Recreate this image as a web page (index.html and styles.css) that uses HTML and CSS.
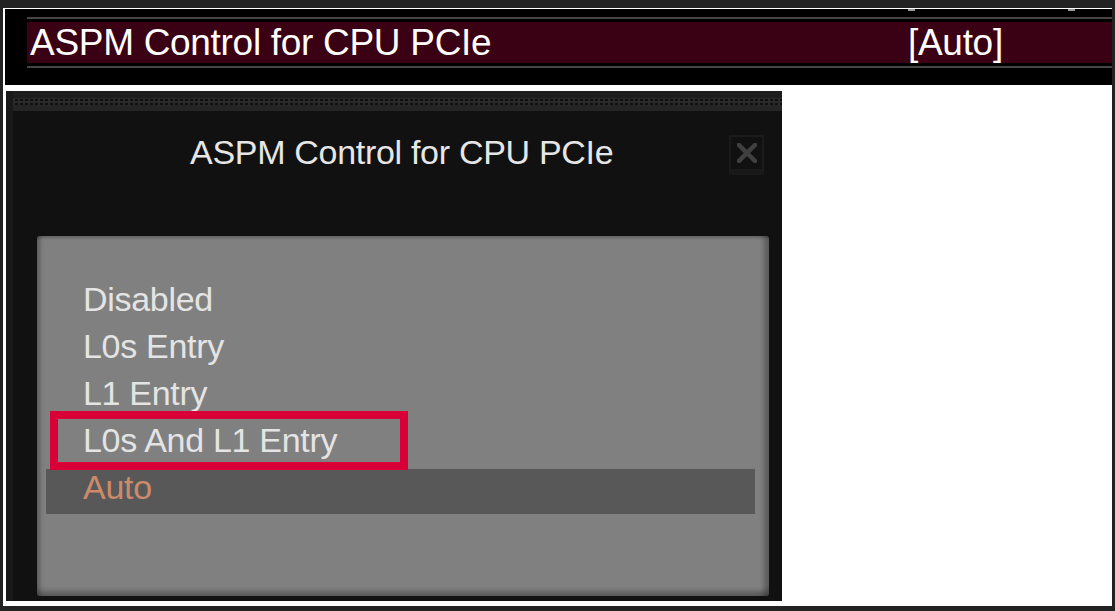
FILE: index.html
```html
<!DOCTYPE html>
<html>
<head>
<meta charset="utf-8">
<link rel="stylesheet" href="styles.css">
</head>
<body>
<div class="frame">
  <section class="bios">
    <div class="prev"><span class="tick tick-a"></span><span class="tick tick-b"></span></div>
    <div class="rule"></div>
    <div class="row">
      <span class="row-label">ASPM Control for CPU PCIe</span>
      <span class="row-value">[Auto]</span>
    </div>
    <div class="rule"></div>
  </section>
  <section class="dialog">
    <div class="dialog-bar"><div class="dots"></div></div>
    <div class="dialog-head">
      <h1 class="dialog-title">ASPM Control for CPU PCIe</h1>
      <button class="close" type="button" aria-label="Close">
        <svg width="20" height="20" viewBox="0 0 20 20"><path d="M2 2 L18 18 M18 2 L2 18" stroke="#404040" stroke-width="4.5" stroke-linecap="square"/></svg>
      </button>
    </div>
    <div class="panel">
      <ul class="options">
        <li class="opt">Disabled</li>
        <li class="opt">L0s Entry</li>
        <li class="opt">L1 Entry</li>
        <li class="opt opt-marked">L0s And L1 Entry<span class="mark"></span></li>
        <li class="opt opt-selected">Auto</li>
      </ul>
    </div>
  </section>
</div>
</body>
</html>
```

FILE: styles.css
```css
html, body {
  margin: 0;
  padding: 0;
}
body {
  background: #222222;
  width: 1115px;
  height: 611px;
  overflow: hidden;
  padding: 8px 3px 0 3px;
  box-sizing: border-box;
  font-family: "Liberation Sans", Arial, sans-serif;
}
.frame {
  background: #ffffff;
  height: 598px;
  padding: 1px 0 0 2px;
  box-sizing: border-box;
}
.bios {
  background: #000000;
  height: 76px;
  padding-left: 22px;
  box-sizing: border-box;
}
.prev {
  height: 8px;
  display: flex;
}
.tick {
  display: block;
  width: 7px;
  height: 2px;
  background: #9a9a9a;
}
.tick-a { margin-left: 881px; }
.tick-b { margin-left: 153px; }
.rule {
  height: 2px;
  background: #454545;
}
.row {
  margin: 3px 0;
  height: 41px;
  background: #3a0013;
  color: #ffffff;
  font-size: 37px;
  letter-spacing: -0.3px;
  line-height: 41px;
  display: grid;
  grid-template-columns: 878px auto;
  padding-left: 3px;
  box-sizing: border-box;
}
.dialog {
  margin: 6px 0 0 1px;
  width: 776px;
  height: 510px;
  background: #111111;
  border-left: 7px solid #191919;
  box-sizing: border-box;
  display: flex;
  flex-direction: column;
}
.dialog-bar {
  height: 20px;
  background: linear-gradient(#1e1e1e 0 7px, #2a2a2a 7px 14px, #252525 14px 20px);
  padding-top: 8px;
  box-sizing: border-box;
}
.dots {
  height: 6px;
  margin-left: 2px;
  background:
    repeating-linear-gradient(90deg, transparent 0 3px, #2a2a2a 3px 5px),
    repeating-linear-gradient(180deg, #0f0f0f 0 2px, #2a2a2a 2px 4px);
}
.dialog-head {
  height: 125px;
  display: flex;
  align-items: flex-start;
  padding: 21px 18px 0 177px;
  box-sizing: border-box;
}
.dialog-title {
  margin: 0;
  font-weight: normal;
  font-size: 34px;
  letter-spacing: -0.3px;
  line-height: 40px;
  color: #e6e6e6;
}
.close {
  margin: 3px 0 0 auto;
  width: 35px;
  height: 40px;
  padding: 6px 0 0 0;
  background: #111111;
  border: 2px solid #1b1b1b;
  border-bottom: 6px solid #191919;
  box-sizing: border-box;
  display: flex;
  justify-content: center;
  align-items: flex-start;
}
.panel {
  margin: 0 13px 5px 24px;
  flex: 1;
  background: #808080;
  border-radius: 3px;
  padding: 45px 14px 0 9px;
  box-shadow:
    inset 0 4px 3px -2px rgba(0,0,0,0.22),
    inset 6px 0 4px -3px rgba(0,0,0,0.28),
    inset -9px 0 5px -4px rgba(0,0,0,0.28),
    inset 0 -9px 5px -4px rgba(0,0,0,0.28);
}
.options {
  list-style: none;
  margin: 0;
  padding: 0;
}
.opt {
  height: 45px;
  margin-bottom: 2px;
  padding-left: 37px;
  font-size: 34px;
  letter-spacing: -0.3px;
  line-height: 36px;
  color: #e4e4e4;
}
.opt-marked {
  position: relative;
}
.mark {
  position: absolute;
  left: 4px;
  top: -11px;
  width: 358px;
  height: 59px;
  border: 8px solid #d80036;
  box-sizing: border-box;
  z-index: 2;
}
.opt-selected {
  background: #585858;
  color: #cc8a6c;
}
```
